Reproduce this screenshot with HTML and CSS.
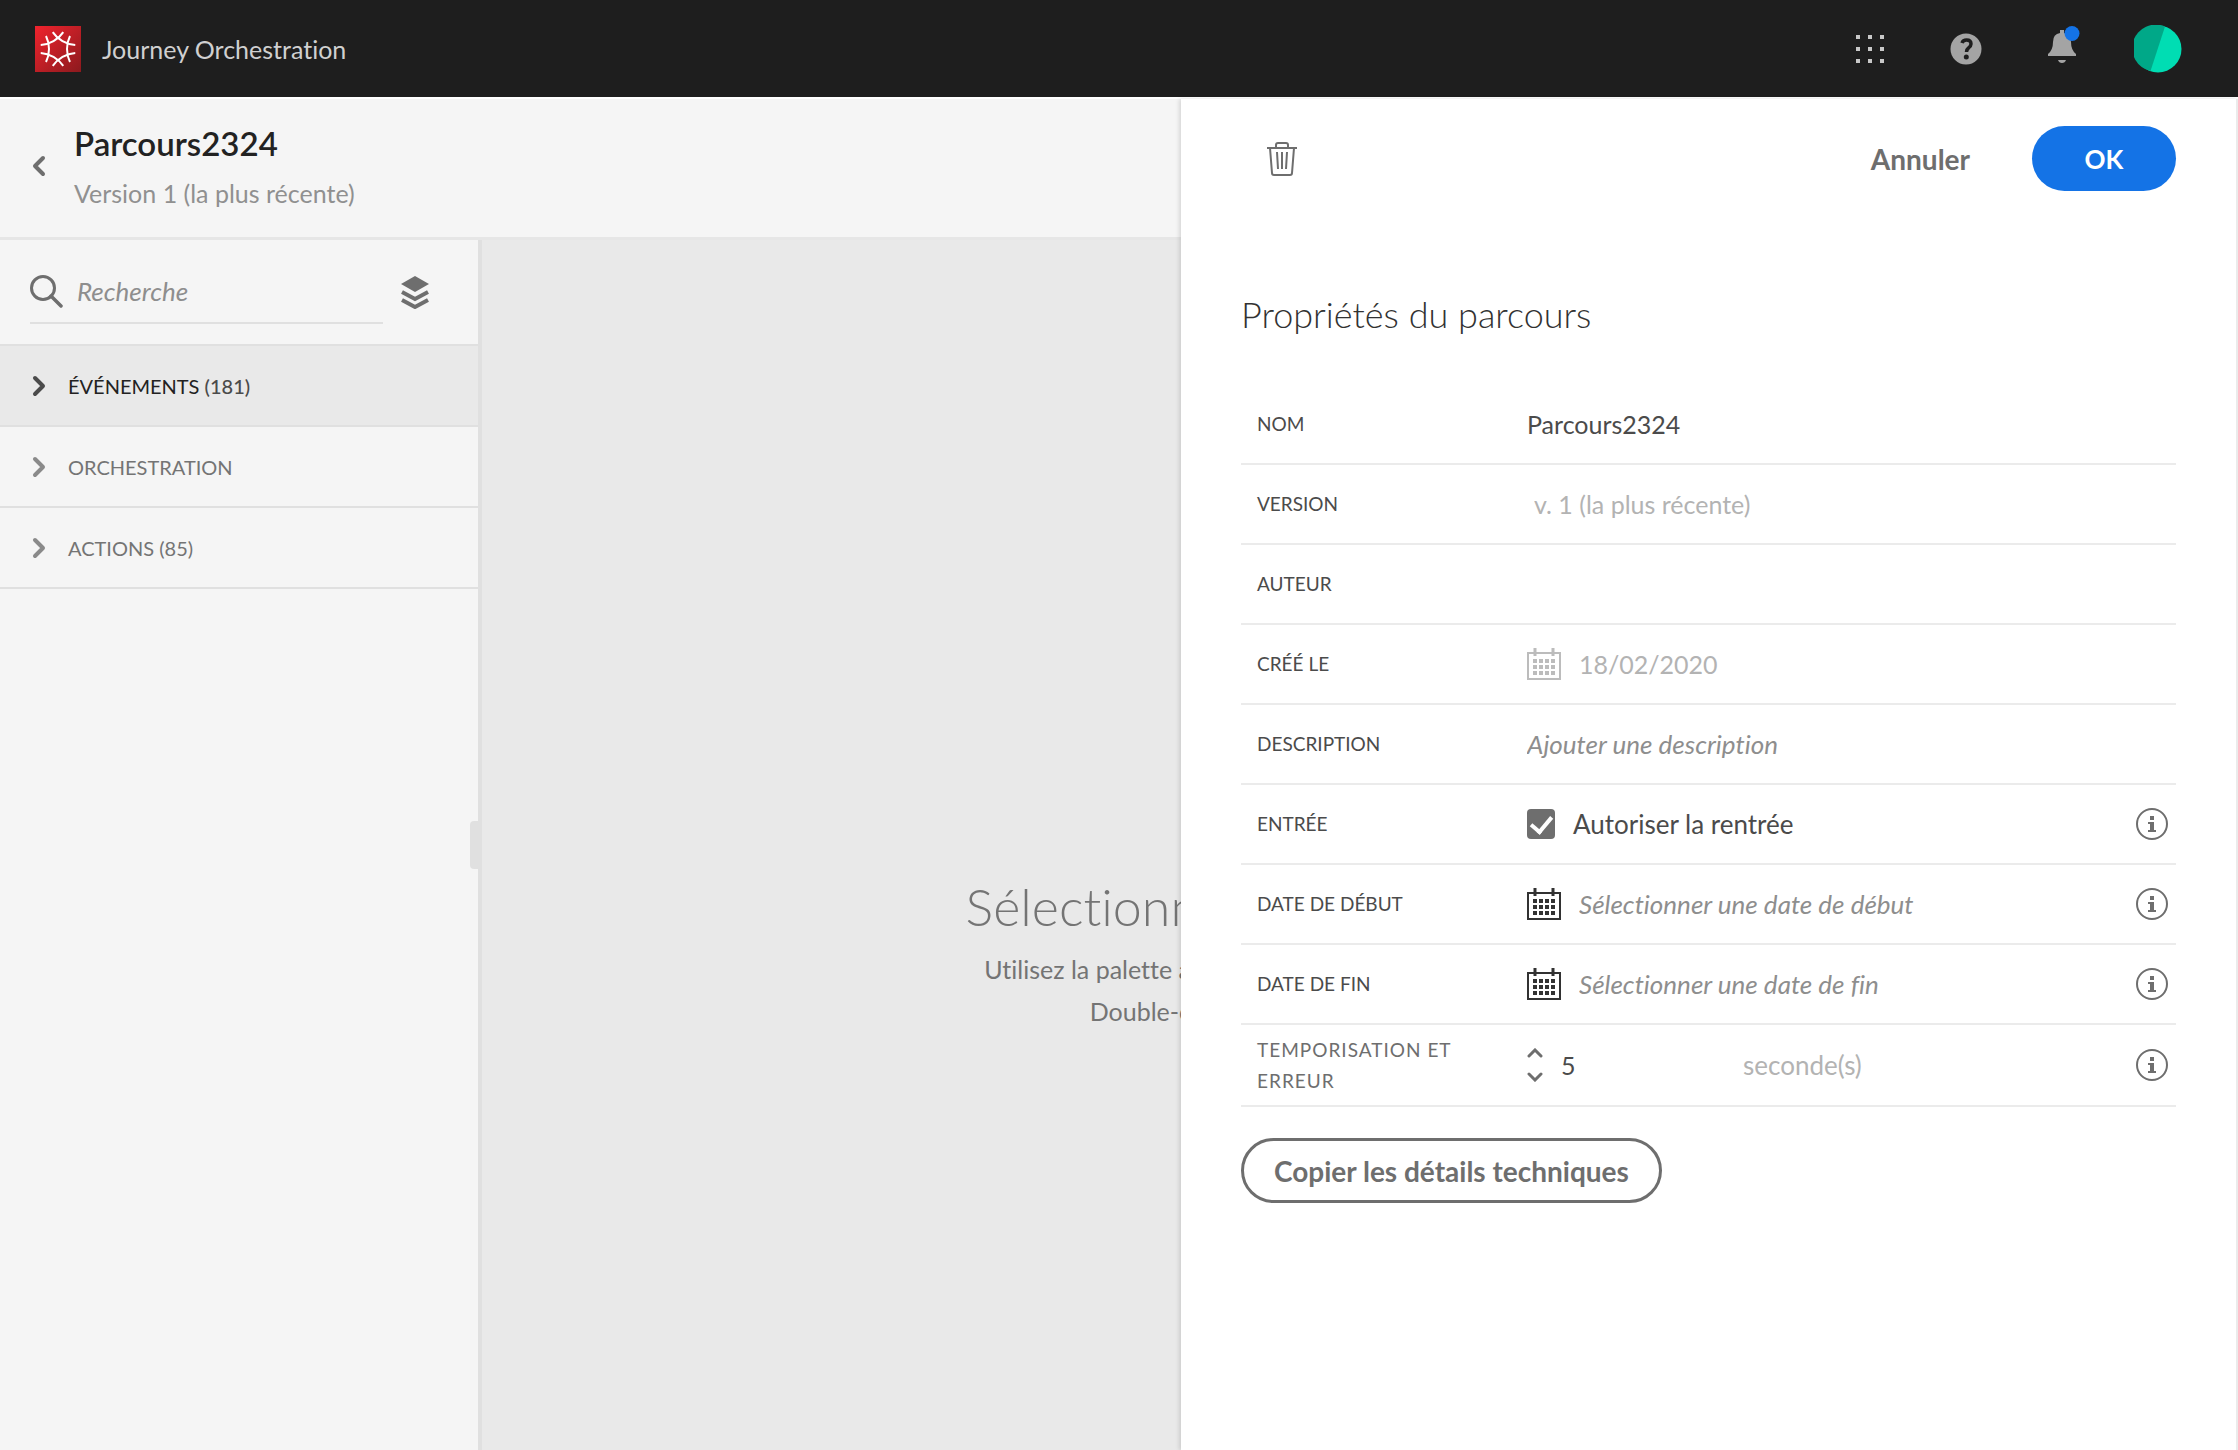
FILE: index.html
```html
<!DOCTYPE html>
<html lang="fr">
<head>
    <meta charset="UTF-8">
    <meta name="viewport" content="width=device-width, initial-scale=1.0">
    <title>Journey Orchestration</title>
    <link rel="stylesheet" href="styles.css">
</head>
<body>
    <!-- Shared symbols -->
    <svg class="symbols" aria-hidden="true">
        <symbol id="chevron" viewBox="0 0 14 22">
            <path d="M3 3l8 8-8 8" fill="none" stroke="currentColor" stroke-width="4" stroke-linecap="round" stroke-linejoin="round"/>
        </symbol>
        <symbol id="stepper" viewBox="0 0 16 10">
            <path d="M2 8l6-6 6 6" fill="none" stroke="currentColor" stroke-width="3" stroke-linecap="round" stroke-linejoin="miter"/>
        </symbol>
        <symbol id="calendar" viewBox="0 0 34 32">
            <path d="M1 5h32v26H1z" fill="none" stroke="currentColor" stroke-width="2"/>
            <path d="M8 0v8M26 0v8" stroke="currentColor" stroke-width="3"/>
            <path d="M6 13h22M6 19h22M6 25h22" stroke="currentColor" stroke-width="4" stroke-dasharray="4 2"/>
        </symbol>
        <symbol id="info" viewBox="0 0 32 32">
            <circle cx="16" cy="16" r="15" fill="none" stroke="currentColor" stroke-width="2"/>
            <path d="M14 8h4v4h-4zM12 14h6v8h2v2h-8v-2h2v-6h-2z" fill="currentColor"/>
        </symbol>
    </svg>

    <header class="topbar">
        <svg class="logo" viewBox="0 0 46 46" aria-hidden="true">
            <defs>
                <linearGradient id="logoFill" x1="0" y1="0" x2="1" y2="1">
                    <stop offset="0" stop-color="#f0232d"/>
                    <stop offset="1" stop-color="#8c1a1e"/>
                </linearGradient>
                <path id="logoArc" d="M11 10Q14 16 14 23Q14 30 11 36"/>
            </defs>
            <rect width="46" height="46" fill="url(#logoFill)"/>
            <g fill="none" stroke="#fff" stroke-width="2">
                <use href="#logoArc"/>
                <use href="#logoArc" transform="rotate(60 23 23)"/>
                <use href="#logoArc" transform="rotate(120 23 23)"/>
                <use href="#logoArc" transform="rotate(180 23 23)"/>
                <use href="#logoArc" transform="rotate(240 23 23)"/>
                <use href="#logoArc" transform="rotate(300 23 23)"/>
            </g>
        </svg>
        <span class="product">Journey Orchestration</span>
        <nav class="topbar-actions">
            <button class="icon-button" aria-label="Applications">
                <svg width="28" height="30" viewBox="0 0 28 30">
                    <path d="M0 3h28M0 15h28M0 27h28" stroke="#c8c8c8" stroke-width="4" stroke-dasharray="4 8"/>
                </svg>
            </button>
            <button class="icon-button" aria-label="Aide">
                <svg width="32" height="32" viewBox="0 0 32 32">
                    <circle cx="16" cy="16" r="15.500" fill="#a4a4a4"/>
                    <path d="M12 10q1-3 4.500-3 4.500 0 4.500 4 0 2-2.500 4-2 1.500-2 4" fill="none" stroke="#1e1e1e" stroke-width="3.500"/>
                    <circle cx="16.300" cy="24" r="2.500" fill="#1e1e1e"/>
                </svg>
            </button>
            <button class="icon-button" aria-label="Notifications">
                <svg class="bell" width="28" height="40" viewBox="0 0 28 40">
                    <path d="M12 1h4v3q7 1 7 9 0 8 5 12v2H0v-2q5-4 5-12 0-8 7-9zM10 31h8q-1 3-4 3t-4-3z" fill="#a4a4a4"/>
                    <circle cx="24" cy="4.500" r="7.500" fill="#1473e6"/>
                </svg>
            </button>
            <button class="icon-button" aria-label="Profil">
                <svg width="48" height="48" viewBox="0 0 48 48">
                    <circle cx="24" cy="24" r="23.500" fill="#00ddb3"/>
                    <path d="M31 1.500A23.500 23.500 0 1 0 16.500 46z" fill="#00a888"/>
                </svg>
            </button>
        </nav>
    </header>

    <div class="layout">
        <div class="workspace">
            <div class="titlebar">
                <button class="icon-button back" aria-label="Retour">
                    <svg class="chevron flip"><use href="#chevron"/></svg>
                </button>
                <div>
                    <h1>Parcours2324</h1>
                    <p class="version">Version 1 (la plus récente)</p>
                </div>
            </div>

            <div class="editor">
                <aside class="palette">
                    <div class="search">
                        <label class="search-field">
                            <svg width="33" height="33" viewBox="0 0 33 33" aria-hidden="true">
                                <circle cx="13" cy="13" r="11.500" fill="none" stroke="#6e6e6e" stroke-width="3"/>
                                <path d="M21 21l10 10" stroke="#6e6e6e" stroke-width="3.500" stroke-linecap="round"/>
                            </svg>
                            <input type="text" placeholder="Recherche" aria-label="Recherche">
                        </label>
                        <button class="icon-button" aria-label="Filtrer">
                            <svg width="30" height="34" viewBox="0 0 30 34">
                                <path d="M15 1l14 8-14 8L1 9z" fill="#6e6e6e"/>
                                <path d="M2 17l13 7 13-7M2 25l13 7 13-7" fill="none" stroke="#6e6e6e" stroke-width="4"/>
                            </svg>
                        </button>
                    </div>
                    <button class="group active">
                        <svg class="chevron"><use href="#chevron"/></svg>
                        <span>ÉVÉNEMENTS <b>(181)</b></span>
                    </button>
                    <button class="group">
                        <svg class="chevron"><use href="#chevron"/></svg>
                        <span>ORCHESTRATION</span>
                    </button>
                    <button class="group">
                        <svg class="chevron"><use href="#chevron"/></svg>
                        <span>ACTIONS (85)</span>
                    </button>
                    <div class="handle"></div>
                </aside>
                <!-- Hint runs under the properties panel -->
                <main class="canvas">
                    <div class="hint">
                        <h2>Sélectionn</h2>
                        <p>Utilisez la palette à</p>
                        <p>Double-c</p>
                    </div>
                </main>
            </div>
        </div>

        <form class="panel">
            <div class="panel-actions">
                <button type="button" class="icon-button trash" aria-label="Supprimer">
                    <svg width="30" height="34" viewBox="0 0 30 34">
                        <path d="M0 6h30M9 5V3q0-2 2-2h8q2 0 2 2v2M3 6l2 25q0 2 2 2h16q2 0 2-2l2-25M10 10l1 17M15 10v17M20 10l-1 17" fill="none" stroke="#6e6e6e" stroke-width="2"/>
                    </svg>
                </button>
                <button type="button" class="cancel">Annuler</button>
                <button type="button" class="confirm">OK</button>
            </div>

            <h2 class="panel-title">Propriétés du parcours</h2>

            <div class="row">
                <label for="name">NOM</label>
                <input type="text" id="name" value="Parcours2324">
            </div>
            <div class="row">
                <label for="version">VERSION</label>
                <input type="text" id="version" class="indent" value="v. 1 (la plus récente)" disabled>
            </div>
            <div class="row">
                <label for="author">AUTEUR</label>
                <input type="text" id="author">
            </div>
            <div class="row">
                <label for="created">CRÉÉ LE</label>
                <div class="field">
                    <svg class="calendar muted"><use href="#calendar"/></svg>
                    <input type="text" id="created" value="18/02/2020" disabled>
                </div>
            </div>
            <div class="row">
                <label for="description">DESCRIPTION</label>
                <input type="text" id="description" placeholder="Ajouter une description">
            </div>
            <div class="row">
                <span class="label">ENTRÉE</span>
                <div class="field">
                    <input type="checkbox" id="reentry" checked>
                    <label for="reentry">Autoriser la rentrée</label>
                </div>
                <button type="button" class="icon-button" aria-label="Info"><svg class="info"><use href="#info"/></svg></button>
            </div>
            <div class="row">
                <label for="start">DATE DE DÉBUT</label>
                <div class="field">
                    <svg class="calendar"><use href="#calendar"/></svg>
                    <input type="text" id="start" placeholder="Sélectionner une date de début">
                </div>
                <button type="button" class="icon-button" aria-label="Info"><svg class="info"><use href="#info"/></svg></button>
            </div>
            <div class="row">
                <label for="end">DATE DE FIN</label>
                <div class="field">
                    <svg class="calendar"><use href="#calendar"/></svg>
                    <input type="text" id="end" placeholder="Sélectionner une date de fin">
                </div>
                <button type="button" class="icon-button" aria-label="Info"><svg class="info"><use href="#info"/></svg></button>
            </div>
            <div class="row timeout">
                <label for="timeout">TEMPORISATION ET ERREUR</label>
                <div class="field">
                    <div class="stepper">
                        <button type="button" class="icon-button" aria-label="Plus"><svg><use href="#stepper"/></svg></button>
                        <button type="button" class="icon-button" aria-label="Moins"><svg class="down"><use href="#stepper"/></svg></button>
                    </div>
                    <input type="number" id="timeout" value="5">
                    <span class="unit">seconde(s)</span>
                </div>
                <button type="button" class="icon-button" aria-label="Info"><svg class="info"><use href="#info"/></svg></button>
            </div>

            <button type="button" class="copy">Copier les détails techniques</button>
        </form>
    </div>
</body>
</html>
```

FILE: styles.css
```css
* {
    box-sizing: border-box;
}

body {
    margin: 0;
    min-height: 100vh;
    display: flex;
    flex-direction: column;
    background-color: #f5f5f5;
    color: #4b4b4b;
    font-family: Lato, "Open Sans", sans-serif;
    font-size: 26px;
    line-height: 32px;
    font-variant-ligatures: no-common-ligatures;
}

h1, h2, p {
    margin: 0;
}

button, input {
    font: inherit;
    font-variant-ligatures: inherit;
    color: inherit;
}

svg {
    display: block;
}

.symbols {
    display: none;
}

.icon-button {
    background: none;
    border: none;
    padding: 0;
    cursor: pointer;
}

/* Top bar */
.topbar {
    display: flex;
    align-items: center;
    height: 97px;
    padding: 0 32px 0 35px;
    background-color: #1e1e1e;
}

.logo {
    width: 46px;
    height: 46px;
}

.product {
    margin-left: 21px;
    color: #d0d0d0;
    font-size: 25px;
}

.topbar-actions {
    display: grid;
    grid-template-columns: repeat(4, 96px);
    place-items: center;
    margin-left: auto;
}

.bell {
    overflow: visible;
}

/* Main layout */
.layout {
    flex: 1;
    display: grid;
    grid-template-columns: minmax(0, 1fr) 1057px;
    border-top: 2px solid #fff;
}

.workspace {
    display: flex;
    flex-direction: column;
    overflow: hidden;
}

.titlebar {
    display: flex;
    align-items: center;
    gap: 28px;
    height: 141px;
    padding: 0 32px 4px;
    border-bottom: 3px solid #e6e6e6;
}

h1 {
    color: #222;
    font-size: 33px;
    line-height: 40px;
    font-weight: 600;
}

.version {
    margin-top: 14px;
    color: #909090;
    font-size: 25px;
}

.chevron {
    width: 14px;
    height: 22px;
    color: #8a8a8a;
}

.flip {
    transform: scaleX(-1);
    color: #6e6e6e;
}

.editor {
    flex: 1;
    display: flex;
}

/* Palette */
.palette {
    position: relative;
    width: 482px;
    border-right: 4px solid #e0e0e0;
}

.search {
    display: flex;
    justify-content: space-between;
    height: 106px;
    padding: 20px 48px 20px 30px;
    border-bottom: 2px solid #e0e0e0;
}

.search-field {
    display: flex;
    align-items: center;
    gap: 14px;
    width: 353px;
    border-bottom: 2px solid #e0e0e0;
}

.search-field svg {
    flex: none;
}

.search-field input {
    width: 100%;
    padding: 0;
    border: none;
    background: none;
}

input::placeholder {
    color: #8e8e8e;
    font-size: 26px;
    font-style: italic;
    opacity: 1;
}

.group {
    display: flex;
    align-items: center;
    gap: 22px;
    width: 100%;
    height: 81px;
    padding: 0 32px;
    border: none;
    border-bottom: 2px solid #e0e0e0;
    background: none;
    color: #747474;
    font-size: 20px;
    text-align: left;
}

.group.active {
    background-color: #e9e9e9;
    color: #222;
}

.group.active .chevron {
    color: #4b4b4b;
}

.group b {
    color: #4b4b4b;
    font-weight: 500;
}

.handle {
    position: absolute;
    right: -2px;
    top: 581px;
    width: 10px;
    height: 48px;
    border-radius: 4px 0 0 4px;
    background-color: #e0e0e0;
}

/* Canvas */
.canvas {
    flex: 1;
    display: flex;
    justify-content: flex-end;
    align-items: center;
    overflow: hidden;
    background-color: #e9e9e9;
}

.hint {
    margin-right: -10px;
    padding-top: 212px;
    text-align: right;
    color: #747474;
    font-size: 25px;
    line-height: 42px;
    white-space: nowrap;
}

.hint h2 {
    margin: 0 -8px 6px 0;
    font-size: 52px;
    line-height: 72px;
    font-weight: 300;
}

/* Properties panel */
.panel {
    padding: 27px 60px;
    background-color: #fff;
    border-right: 2px solid #ebebeb;
    box-shadow: -2px 0 4px rgba(0, 0, 0, 0.12);
}

.panel-actions {
    display: flex;
    align-items: center;
}

.trash {
    margin: 0 auto 0 26px;
}

.cancel {
    margin-right: 62px;
    padding: 0;
    border: none;
    background: none;
    color: #6e6e6e;
    font-size: 28px;
    font-weight: 700;
}

.confirm {
    width: 144px;
    height: 65px;
    border: none;
    border-radius: 33px;
    background-color: #1473e6;
    color: #fff;
    font-weight: 700;
}

.panel-title {
    margin: 96px 0 44px;
    color: #323232;
    font-size: 36px;
    line-height: 54px;
    font-weight: 300;
}

.row {
    display: grid;
    grid-template-columns: 270px minmax(0, 1fr) auto;
    align-items: center;
    height: 80px;
    padding: 0 8px 0 16px;
    border-bottom: 2px solid #ebebeb;
}

.row > label, .label {
    font-size: 19px;
}

.row input {
    width: 100%;
    padding: 0;
    border: none;
    background: none;
    font-size: 25px;
}

.row input:disabled {
    color: #b3b3b3;
}

.row .indent {
    padding-left: 7px;
}

.field {
    display: flex;
    align-items: center;
    gap: 18px;
}

.calendar {
    flex: none;
    width: 34px;
    height: 32px;
    color: #323232;
}

.muted {
    color: #bcbcbc;
}

.info {
    width: 32px;
    height: 32px;
    color: #6e6e6e;
}

.row input[type="checkbox"] {
    appearance: none;
    width: 28px;
    height: 30px;
    margin: 0;
    border-radius: 4px;
    background-color: #6e6e6e;
    display: grid;
    place-items: center;
}

.row input[type="checkbox"]:checked::after {
    content: "";
    width: 9px;
    height: 17px;
    margin-bottom: 4px;
    border: solid #fff;
    border-width: 0 4px 4px 0;
    transform: rotate(40deg);
}

.timeout {
    height: 82px;
}

.timeout > label {
    width: 210px;
    color: #6e6e6e;
    line-height: 31px;
    letter-spacing: 1px;
}

.stepper {
    display: grid;
    gap: 14px;
}

.stepper svg {
    width: 16px;
    height: 10px;
    color: #6e6e6e;
}

.down {
    transform: scaleY(-1);
}

.row input[type="number"] {
    width: 164px;
    appearance: textfield;
}

.unit {
    color: #b3b3b3;
}

.copy {
    height: 65px;
    margin-top: 31px;
    padding: 0 30px;
    border: 3px solid #6e6e6e;
    border-radius: 33px;
    background: none;
    color: #6e6e6e;
    font-size: 28px;
    font-weight: 700;
}
```
